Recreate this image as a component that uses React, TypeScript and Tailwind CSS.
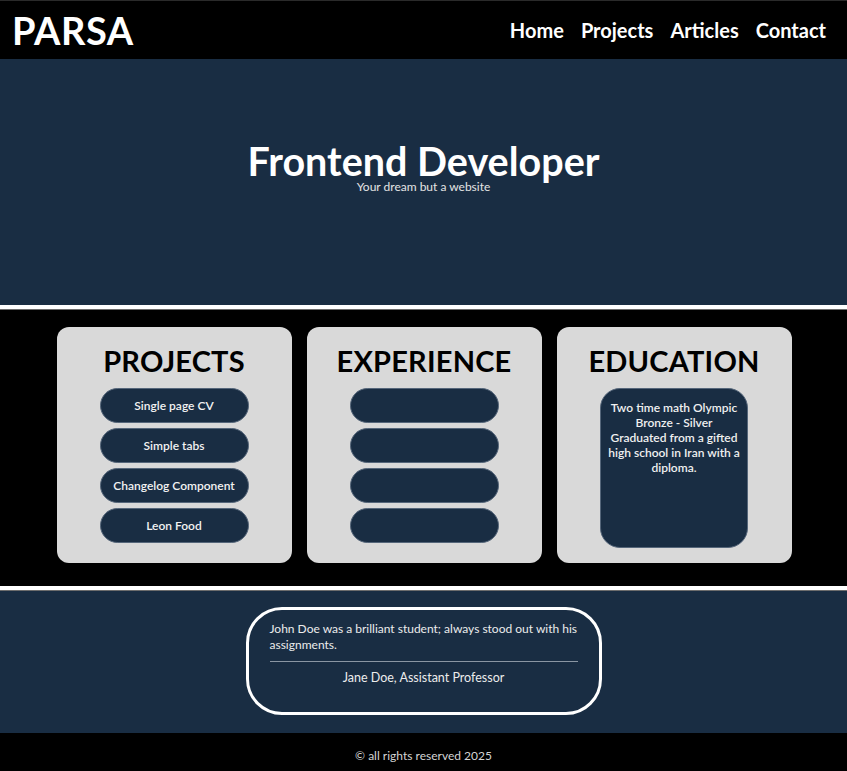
import React from "react";

const navy = "bg-[#192d43]";

function Pill({ label }: { label?: string }) {
  return (
    <div className="flex h-[35px] w-[149px] items-center justify-center rounded-full border border-[#55667a] bg-[#192d43] text-[12px] font-semibold text-[#f2f2f2]">
      {label}
    </div>
  );
}

function Card({ title, children }: { title: string; children: React.ReactNode }) {
  return (
    <div className="flex h-[236px] w-[235px] flex-col items-center rounded-[12px] bg-[#d9d9d9] pt-[18px]">
      <h2 className="text-[29px] font-bold leading-[32px] tracking-[0.2px] text-black">{title}</h2>
      <div className="mt-[11px] flex flex-col gap-[5px]">{children}</div>
    </div>
  );
}

export default function App() {
  return (
    <div className="min-h-screen bg-black font-['Lato',sans-serif]">
      <header className="flex h-[59px] items-center justify-between border-t border-[#2a2a2a] bg-black pl-[12px] pr-[21px]">
        <div className="text-[38px] font-bold leading-none tracking-[0.5px] text-white">PARSA</div>
        <nav className="flex gap-[17px] text-[20px] font-bold text-white">
          <span>Home</span>
          <span>Projects</span>
          <span>Articles</span>
          <span>Contact</span>
        </nav>
      </header>

      <section className={`flex h-[246px] flex-col items-center ${navy} pt-[84px]`}>
        <h1 className="text-[39.5px] font-bold leading-[36px] text-white">Frontend Developer</h1>
        <p className="mt-px text-[12px] leading-[14px] text-[#e4e4e4]">Your dream but a website</p>
      </section>
      <div className="h-[4px] bg-white" />
      <div className="h-px bg-[#6d6d6d]" />

      <section className="flex h-[276px] justify-center gap-[15px] bg-black pl-px pt-[17px]">
        <Card title="PROJECTS">
          <Pill label="Single page CV" />
          <Pill label="Simple tabs" />
          <Pill label="Changelog Component" />
          <Pill label="Leon Food" />
        </Card>
        <Card title="EXPERIENCE">
          <Pill />
          <Pill />
          <Pill />
          <Pill />
        </Card>
        <Card title="EDUCATION">
          <div className="h-[160px] w-[148px] rounded-[20px] border border-[#55667a] bg-[#192d43] px-[4px] pt-[11px] text-center text-[12px] font-semibold leading-[15px] text-[#f0f0f0]">
            Two time math Olympic
            <br />
            Bronze - Silver
            <br />
            Graduated from a gifted
            <br />
            high school in Iran with a
            <br />
            diploma.
          </div>
        </Card>
      </section>
      <div className="h-[4px] bg-white" />
      <div className="h-px bg-[#6d6d6d]" />

      <section className={`flex h-[142px] justify-center ${navy} pt-[16px]`}>
        <div className="h-[108px] w-[356px] rounded-[36px] border-[3px] border-white px-[21px] pt-[11px]">
          <p className="text-[12px] leading-[16px] text-[#ececec]">
            John Doe was a brilliant student; always stood out with his assignments.
          </p>
          <div className="mt-[8px] h-px bg-[#8a96a3]" />
          <p className="mt-[8px] text-center text-[12.5px] leading-[16px] text-[#ececec]">Jane Doe, Assistant Professor</p>
        </div>
      </section>

      <footer className="flex h-[38px] items-center justify-center bg-black pt-[8px] text-[12px] text-[#d4d4d4]">
        © all rights reserved 2025
      </footer>
    </div>
  );
}
